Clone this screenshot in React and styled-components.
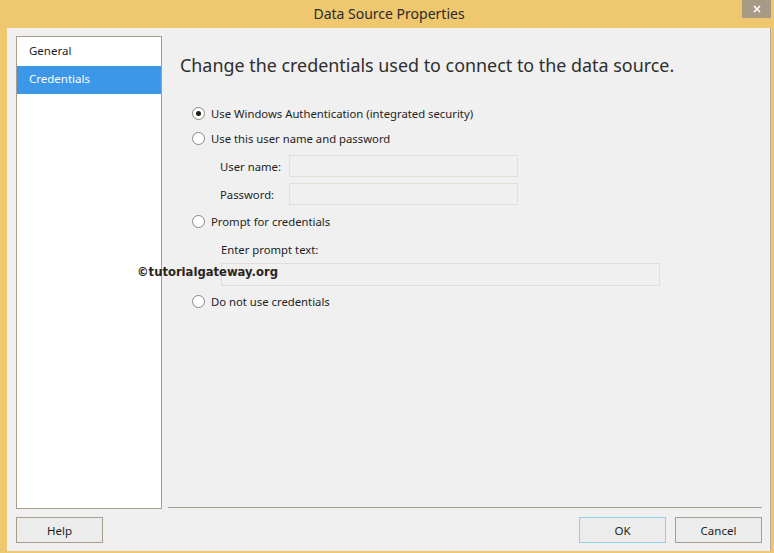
import styled, { createGlobalStyle } from "styled-components";

const Global = createGlobalStyle`
  html, body { margin: 0; padding: 0; }
  body {
    width: 774px;
    height: 553px;
    overflow: hidden;
    font-family: "Noto Sans", "Open Sans", sans-serif;
    background: #efc76e;
  }
`;

const Window = styled.div`
  position: relative;
  width: 774px;
  height: 553px;
  box-sizing: border-box;
  background: #efc76e;
  display: flex;
  flex-direction: column;
  padding: 0 3px 2px 7px;
`;

const TitleBar = styled.div`
  height: 28px;
  display: flex;
  align-items: center;
  justify-content: center;
  font-size: 14px;
  color: #2b2b2b;
  padding-bottom: 2px;
  box-sizing: border-box;
`;

const CloseBtn = styled.div`
  position: absolute;
  top: 0;
  right: 3px;
  width: 29px;
  height: 18px;
  background: #a99a86;
  display: flex;
  align-items: center;
  justify-content: center;
`;

const Client = styled.div`
  flex: 1;
  background: #f0f0f0;
  border-right: 1px solid #b5aa9c;
  display: flex;
  flex-direction: column;
  padding: 8px 8px 0 9px;
`;

const Body = styled.div`
  display: flex;
  height: 473px;
  gap: 6px;
`;

const Nav = styled.div`
  width: 146px;
  box-sizing: border-box;
  background: #fff;
  border: 1px solid #a89c8e;
  padding-top: 1px;
`;

const NavItem = styled.div`
  height: 28px;
  line-height: 26px;
  padding-left: 12px;
  font-size: 11.5px;
  color: ${(p) => (p.$active ? "#fff" : "#1e1e1e")};
  background: ${(p) => (p.$active ? "#3c97e8" : "transparent")};
`;

const Content = styled.div`
  flex: 1;
  position: relative;
  border-bottom: 1px solid #a89c8e;
  margin-bottom: 1px;
  padding-left: 12px;
`;

const Heading = styled.h1`
  margin: 17px 0 24px;
  font-weight: normal;
  font-size: 17.9px;
  color: #2e2e2e;
`;

const Option = styled.div`
  display: flex;
  align-items: center;
  height: 25px;
  margin-top: ${(p) => p.$gap || 0}px;
  padding-left: 12px;
  font-size: 11.3px;
  color: #1e1e1e;
  gap: 6px;
`;

const Radio = styled.span`
  width: 13px;
  height: 13px;
  box-sizing: border-box;
  border-radius: 50%;
  border: 1px solid #8d857c;
  background: #fff;
  display: flex;
  align-items: center;
  justify-content: center;
  &::after {
    content: "";
    width: 5px;
    height: 5px;
    border-radius: 50%;
    background: ${(p) => (p.$checked ? "#1c1c1c" : "transparent")};
  }
`;

const Field = styled.div`
  display: grid;
  grid-template-columns: 69px 229px;
  align-items: center;
  margin-top: ${(p) => p.$gap || 0}px;
  padding-left: 40px;
  font-size: 11.3px;
  color: #1e1e1e;
  height: 28px;
`;

const Input = styled.div`
  height: 22px;
  box-sizing: border-box;
  border: 1px solid #e2ded8;
  background: #f0f0f0;
`;

const PromptLabel = styled.div`
  padding-left: 41px;
  margin-top: 8px;
  font-size: 11.3px;
  color: #1e1e1e;
  height: 18px;
`;

const PromptInput = styled(Input)`
  margin: 3px 0 0 41px;
  width: 439px;
  height: 23px;
`;

const Watermark = styled.div`
  position: absolute;
  left: -31px;
  top: 229px;
  font-family: "DejaVu Sans", sans-serif;
  font-weight: bold;
  font-size: 11.6px;
  color: #2a2420;
`;

const Footer = styled.div`
  display: flex;
  justify-content: space-between;
  padding-top: 8px;
`;

const Button = styled.div`
  width: 87px;
  height: 26px;
  box-sizing: border-box;
  border: 1px solid ${(p) => (p.$default ? "#8fd0e6" : "#a89c8e")};
  background: #ececec;
  display: flex;
  align-items: center;
  justify-content: center;
  font-size: 11.5px;
  color: #1e1e1e;
`;

const Buttons = styled.div`
  display: flex;
  gap: 9px;
`;

export default function App() {
  return (
    <>
      <Global />
      <Window>
        <TitleBar>Data Source Properties</TitleBar>
        <CloseBtn>
          <svg width="10" height="10" viewBox="0 0 10 10">
            <path d="M2 2 L8 8 M8 2 L2 8" stroke="#fff" strokeWidth="1.6" />
          </svg>
        </CloseBtn>
        <Client>
          <Body>
            <Nav>
              <NavItem>General</NavItem>
              <NavItem $active>Credentials</NavItem>
            </Nav>
            <Content>
              <Heading>Change the credentials used to connect to the data source.</Heading>
              <Option>
                <Radio $checked />
                Use Windows Authentication (integrated security)
              </Option>
              <Option>
                <Radio />
                Use this user name and password
              </Option>
              <Field $gap={1}>
                <span>User name:</span>
                <Input />
              </Field>
              <Field>
                <span>Password:</span>
                <Input />
              </Field>
              <Option $gap={1}>
                <Radio />
                Prompt for credentials
              </Option>
              <PromptLabel>Enter prompt text:</PromptLabel>
              <PromptInput />
              <Option $gap={3}>
                <Radio />
                Do not use credentials
              </Option>
              <Watermark>©tutorialgateway.org</Watermark>
            </Content>
          </Body>
          <Footer>
            <Button>Help</Button>
            <Buttons>
              <Button $default>OK</Button>
              <Button>Cancel</Button>
            </Buttons>
          </Footer>
        </Client>
      </Window>
    </>
  );
}
